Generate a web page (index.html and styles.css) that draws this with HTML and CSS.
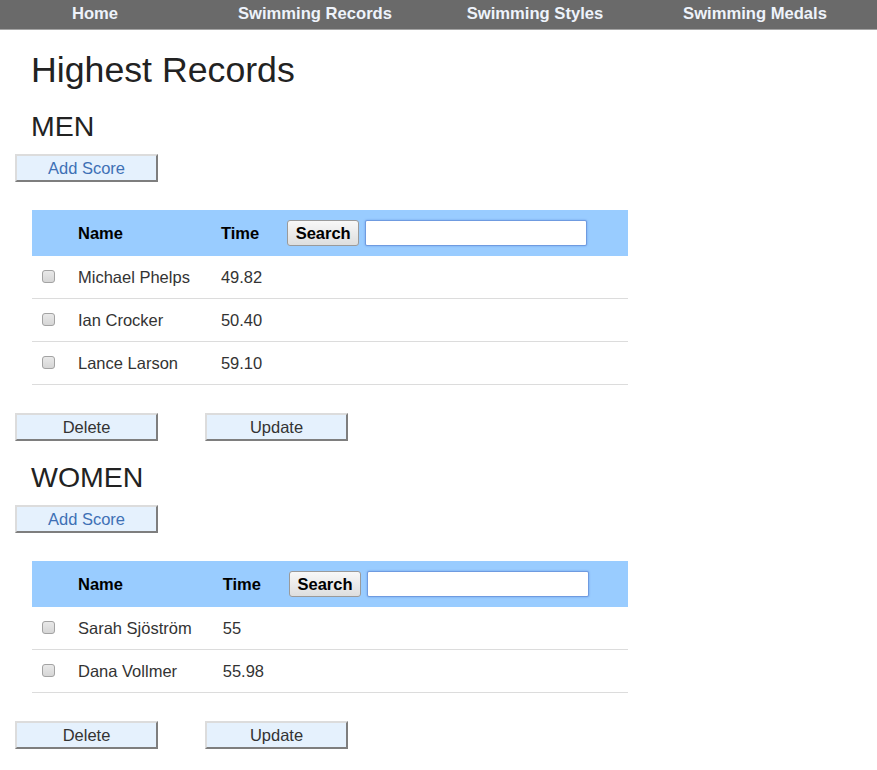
FILE: index.html
```html
<!DOCTYPE html>
<html lang="en">
<head>
<meta charset="utf-8">
<title>Highest Records</title>
<link rel="stylesheet" href="styles.css">
</head>
<body>
<nav class="topnav">
  <ul class="topnav-list">
    <li><a href="#">Home</a></li>
    <li><a href="#">Swimming Records</a></li>
    <li><a href="#">Swimming Styles</a></li>
    <li><a href="#">Swimming Medals</a></li>
  </ul>
</nav>
<main class="page">
  <h1 class="page-title">Highest Records</h1>

  <section class="group">
    <h2 class="group-title">MEN</h2>
    <button class="btn btn-add">Add Score</button>
    <table class="records">
      <thead>
        <tr>
          <th class="c-check"></th>
          <th class="c-name">Name</th>
          <th class="c-time">Time</th>
          <th class="c-search"><button class="search-btn">Search</button><input class="search-input" type="text"></th>
        </tr>
      </thead>
      <tbody>
        <tr><td class="c-check"><input type="checkbox" class="cb"></td><td class="c-name">Michael Phelps</td><td class="c-time">49.82</td><td class="c-search"></td></tr>
        <tr><td class="c-check"><input type="checkbox" class="cb"></td><td class="c-name">Ian Crocker</td><td class="c-time">50.40</td><td class="c-search"></td></tr>
        <tr><td class="c-check"><input type="checkbox" class="cb"></td><td class="c-name">Lance Larson</td><td class="c-time">59.10</td><td class="c-search"></td></tr>
      </tbody>
    </table>
    <div class="actions">
      <button class="btn">Delete</button>
      <button class="btn">Update</button>
    </div>
  </section>

  <section class="group">
    <h2 class="group-title">WOMEN</h2>
    <button class="btn btn-add">Add Score</button>
    <table class="records">
      <thead>
        <tr>
          <th class="c-check"></th>
          <th class="c-name">Name</th>
          <th class="c-time">Time</th>
          <th class="c-search"><button class="search-btn">Search</button><input class="search-input" type="text"></th>
        </tr>
      </thead>
      <tbody>
        <tr><td class="c-check"><input type="checkbox" class="cb"></td><td class="c-name">Sarah Sjöström</td><td class="c-time">55</td><td class="c-search"></td></tr>
        <tr><td class="c-check"><input type="checkbox" class="cb"></td><td class="c-name">Dana Vollmer</td><td class="c-time">55.98</td><td class="c-search"></td></tr>
      </tbody>
    </table>
    <div class="actions">
      <button class="btn">Delete</button>
      <button class="btn">Update</button>
    </div>
  </section>
</main>
</body>
</html>
```
FILE: styles.css
```css
html, body {
  margin: 0;
  padding: 0;
  background: #ffffff;
}

body {
  font-family: "Liberation Sans", Arial, sans-serif;
  font-size: 16.5px;
  color: #333333;
}

/* top navigation */
.topnav {
  background: #6a6a6a;
  border-bottom: 1px solid #a4a4a4;
  height: 29px;
  overflow: hidden;
}

.topnav-list {
  list-style: none;
  margin: 0 0 0 -15px;
  padding: 0;
  display: grid;
  grid-template-columns: repeat(4, 220px);
}

.topnav-list li {
  text-align: center;
}

.topnav-list a {
  display: block;
  color: #eef3fb;
  text-decoration: none;
  font-weight: bold;
  font-size: 16.6px;
  line-height: 27px;
  padding-bottom: 2px;
  white-space: nowrap;
}

/* page */
.page {
  padding: 0 0 0 15px;
}

.page-title {
  margin: 20px 0 0 16px;
  font-size: 35.7px;
  line-height: 40px;
  font-weight: normal;
  color: #222222;
}

.group-title {
  margin: 20px 0 0 16px;
  font-size: 28.5px;
  line-height: 32px;
  font-weight: normal;
  color: #222222;
}

.btn {
  display: inline-block;
  box-sizing: border-box;
  width: 143px;
  height: 28px;
  margin: 0;
  padding: 0;
  background: #e5f1fd;
  border-style: solid;
  border-width: 2px;
  border-color: #dcdcdc #7e7e7e #7e7e7e #dcdcdc;
  font-family: "Liberation Sans", Arial, sans-serif;
  font-size: 16.5px;
  color: #333333;
  line-height: 22px;
  text-align: center;
}

.btn-add {
  display: block;
  margin-top: 12px;
  color: #3e70b5;
}

/* table */
.records {
  margin: 28px 0 0 17px;
  width: 596px;
  border-collapse: collapse;
  border-spacing: 0;
}

.records th {
  background: #99ccff;
  height: 46px;
  padding: 0 12px;
  text-align: left;
  font-weight: bold;
  color: #000000;
  vertical-align: middle;
}

.records td {
  height: 42px;
  padding: 0 12px;
  border-bottom: 1px solid #dcdcdc;
  vertical-align: middle;
  color: #333333;
}

.records .c-check,
.records .c-name,
.records .c-time {
  width: 1%;
  white-space: nowrap;
}

.records .c-check {
  padding: 0 11px 0 10px;
}

.records .c-name {
  padding-right: 19px;
}

.records .c-time {
  padding-right: 13px;
}

.records .c-search {
  white-space: nowrap;
}

.cb {
  -webkit-appearance: none;
  appearance: none;
  display: block;
  box-sizing: border-box;
  width: 13px;
  height: 13px;
  margin: -1px 0 0 0;
  border: 1px solid #a3a3a3;
  border-radius: 3px;
  background: linear-gradient(#e9e9e9, #d6d6d6);
}

.search-btn {
  box-sizing: border-box;
  width: 72px;
  height: 26px;
  margin: 0;
  padding: 0;
  vertical-align: middle;
  background: linear-gradient(#f8f8f8, #dedede);
  border: 1px solid #9a9a9a;
  border-radius: 3px;
  font-family: "Liberation Sans", Arial, sans-serif;
  font-weight: bold;
  font-size: 16.5px;
  color: #000000;
}

.search-input {
  box-sizing: border-box;
  width: 222px;
  height: 26px;
  margin: 0 0 0 6px;
  padding: 0 4px;
  vertical-align: middle;
  background: #ffffff;
  border: 1px solid #6f9be0;
  border-radius: 2px;
  box-shadow: 0 0 2px rgba(70, 120, 210, 0.6);
  font-family: "Liberation Sans", Arial, sans-serif;
  font-size: 15px;
}

.actions {
  display: flex;
  gap: 47px;
  margin-top: 28px;
}
```
